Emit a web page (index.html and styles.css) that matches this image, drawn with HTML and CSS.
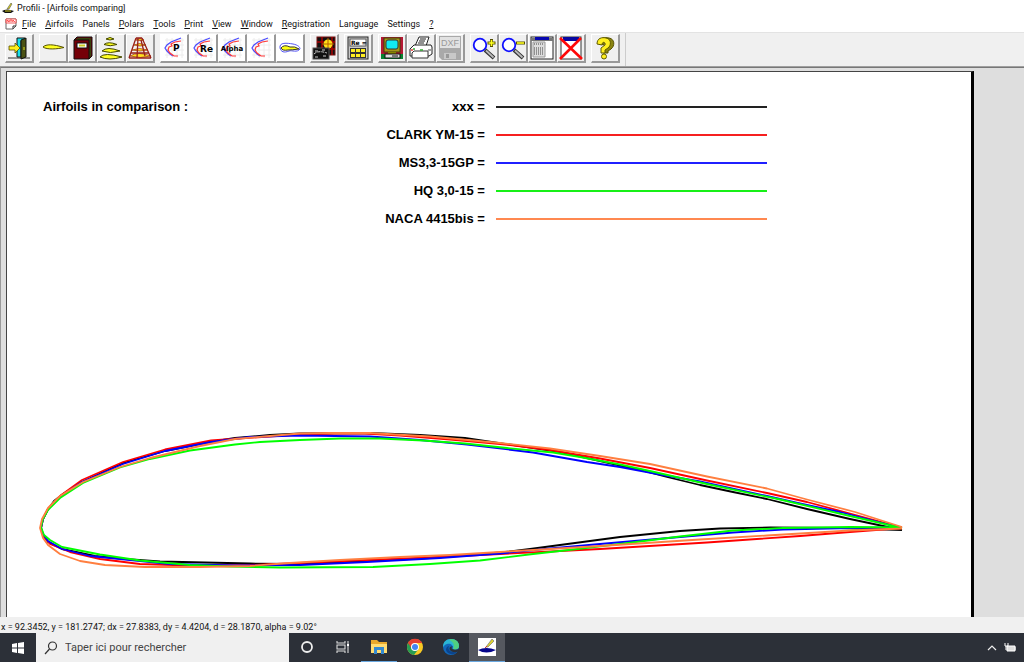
FILE: index.html
```html
<!DOCTYPE html>
<html lang="en">
<head>
<meta charset="utf-8">
<title>Profili - [Airfoils comparing]</title>
<link rel="stylesheet" href="styles.css">
</head>
<body>
<svg class="defs" aria-hidden="true">
  <defs>
    <g id="polar">
      <path d="M3 4H22M3 9H22M3 14H22M3 19H22M5 2V22M10 2V22M15 2V22M20 2V22" stroke="#ececec" fill="none"/>
      <path d="M19 2L14 4L9 6L5 9L3 12L5 15L8 18L11 20" stroke="#4848ff" stroke-width="1.2" fill="none"/>
      <path d="M19 5L13 6L9 8L10 10L7 11L6 14L8 17L12 20L16 20" stroke="#ff3838" stroke-width="1.2" fill="none"/>
    </g>
    <g id="lens">
      <circle cx="8" cy="9" r="6.3" fill="#fff" stroke="#1111ff" stroke-width="1.8"/>
      <path d="M13 14L22 22" stroke="#333" stroke-width="4"/>
      <path d="M14 14.500L21.500 21.500" stroke="#bbb" stroke-width="1.800"/>
    </g>
  </defs>
</svg>
<div class="app">
  <header class="titlebar">
    <svg class="app-icon" viewBox="0 0 12 12"><path d="M0 9Q4 6 12 9L9 11H3Z" fill="#111"/><path d="M5 7L9 1L10 2L7 7Z" fill="#d8cf20" stroke="#555" stroke-width=".6"/><path d="M3 9H9" stroke="#d8cf20"/></svg>
    <span>Profili - [Airfoils comparing]</span>
  </header>
  <nav class="menubar">
    <svg class="doc-icon" viewBox="0 0 12 12"><path d="M1 1H11V8L8 11H1Z" fill="#fff" stroke="#666"/><path d="M1 1H11V5H1Z" fill="#fff" stroke="#e33" stroke-width=".8"/><path d="M2 4V2L4 4V2M5 4V2H7V4M8 4V2L10 4" stroke="#f33" fill="none" stroke-width=".8"/><path d="M8 11V8H11" fill="none" stroke="#333"/></svg>
    <button><u>F</u>ile</button>
    <button><u>A</u>irfoils</button>
    <button>Panels</button>
    <button><u>P</u>olars</button>
    <button><u>T</u>ools</button>
    <button><u>P</u>rint</button>
    <button><u>V</u>iew</button>
    <button><u>W</u>indow</button>
    <button><u>R</u>egistration</button>
    <button>Language</button>
    <button>Settings</button>
    <button><u>?</u></button>
  </nav>
  <div class="toolbar">
    <div class="tools">
      <div class="group">
        <button aria-label="Exit"><svg viewBox="0 0 24 24"><path d="M1 22H23" stroke="#333"/><path d="M10 2H18V5H14V21H10Z" fill="#18e0e8" stroke="#111"/><path d="M14 4L19 2V21L14 23Z" fill="#4b5214" stroke="#111"/><path d="M17 11V14" stroke="#dd2"/><path d="M2 10H8V7L13 12L8 17V14H2Z" fill="#ffee18" stroke="#554c00" stroke-width=".8"/></svg></button>
      </div>
      <div class="group">
        <button aria-label="Airfoil"><svg viewBox="0 0 24 24"><path d="M2 11C5 8 12 8 23 11.500C17 13 6 14 2 11Z" fill="#ffff20" stroke="#555000"/></svg></button>
        <button aria-label="Library"><svg viewBox="0 0 24 24"><path d="M4 4L7 1H22V20L19 23H4Z" fill="#750008" stroke="#111"/><path d="M5 4L8 2H21L19 4Z" fill="#38420c"/><path d="M19 4L21 2V20L19 22Z" fill="#38420c"/><path d="M4 4H19V23" fill="none" stroke="#111"/><rect x="7" y="7" width="10" height="5" fill="#fff" stroke="#111"/><path d="M9 9.500H15" stroke="#cc2" stroke-width="2"/></svg></button>
        <button aria-label="Airfoil set"><svg viewBox="0 0 24 24" fill="#ffff20" stroke="#444800"><path d="M7 3Q11 0 15 3Q11 5 7 3ZM5 8.500Q9 5 18 8.500Q11 11 5 8.500ZM3 15Q8 10 21 15Q11 18 3 15ZM1 21Q5 16 23 21Q10 25 1 21Z"/></svg></button>
        <button aria-label="Wing"><svg viewBox="0 0 24 24"><g fill="#ffe020" stroke="#a54018" stroke-width=".8"><path d="M8 4Q12 1 16 4Q12 5 8 4ZM6 9Q11 6 18 9Q12 11 6 9ZM4 14Q11 11 20 14Q12 16 4 14ZM2 20Q10 15 23 20Q12 23 2 20Z"/></g><path d="M8 2L1 22M10 2L9 22M14 2L23 22M13 4L17 20M8 2H14M1 22H23M3 17H21" fill="none" stroke="#982018" stroke-width="1.300"/></svg></button>
      </div>
      <div class="group">
        <button class="white" aria-label="Polar P"><svg viewBox="0 0 24 24"><use href="#polar"/><text x="11" y="15" class="glyph">P</text></svg></button>
        <button class="white" aria-label="Polar Re"><svg viewBox="0 0 24 24"><use href="#polar"/><text x="9" y="16" class="glyph">Re</text></svg></button>
        <button class="white" aria-label="Polar Alpha"><svg viewBox="0 0 24 24"><use href="#polar"/><text x="12" y="15" class="glyph small">Alpha</text></svg></button>
        <button class="white" aria-label="Polar"><svg viewBox="0 0 24 24"><use href="#polar"/></svg></button>
        <button class="white" aria-label="Compare airfoils"><svg viewBox="0 0 24 24"><path d="M2 12C1 6 9 7 15 8C20 9 22 11 22 13C19 17 14 14 11 15C6 17 3 16 2 12Z" fill="none" stroke="#5555f5"/><path d="M3 12Q6 8 12 11Q17 10 21 13Q14 14 10 14Q4 15 3 12Z" fill="#ffff10" stroke="#333"/></svg></button>
      </div>
      <div class="group">
        <button aria-label="Processing"><svg viewBox="0 0 24 24"><rect x="5" y="1" width="18" height="18" fill="#111" stroke="#711"/><path d="M5 6H23M5 13H23M10 1V19M20 1V19" stroke="#a00" stroke-width="1.500"/><circle cx="16" cy="8" r="4.500" fill="#ffe018"/><path d="M10 8H22M16 2V14" stroke="#b66000"/><rect x="1" y="12" width="16" height="11" fill="#111" stroke="#555"/><path d="M2 18Q6 14 15 17M3 15H6M10 14H14M3 21H7M11 20H15" stroke="#ccc" fill="none" stroke-dasharray="3 1"/></svg></button>
      </div>
      <div class="group">
        <button aria-label="Reynolds calculator"><svg viewBox="0 0 24 24"><rect x="2" y="1" width="20" height="22" fill="#c8c8c8" stroke="#222"/><rect x="4" y="3" width="16" height="7" fill="#fff" stroke="#555"/><text x="5" y="9" class="glyph tiny">Re =</text><path d="M4 12H20V22H4Z" fill="#333"/><path d="M5 13H9V16H5ZM10 13H14V16H10ZM15 13H19V16H15ZM5 18H9V21H5ZM10 18H14V21H10ZM15 18H19V21H15Z" fill="#ffee20"/></svg></button>
      </div>
      <div class="group">
        <button aria-label="Display"><svg viewBox="0 0 24 24"><rect x="1" y="1" width="22" height="22" fill="#b51835"/><path d="M1 18H23V23H1Z" fill="#078330"/><rect x="4" y="2" width="16" height="14" fill="#a59618" stroke="#3c3c08"/><rect x="6" y="4" width="12" height="9" rx="2" fill="#12eaf2" stroke="#333"/><path d="M8 16H16V19H8Z" fill="#888400"/><rect x="5" y="18" width="15" height="4" fill="#ddd" stroke="#111"/><path d="M12 20H18" stroke="#111"/></svg></button>
        <button aria-label="Print"><svg viewBox="0 0 24 24"><path d="M6 10L10 1H20L17 10Z" fill="#fff" stroke="#222"/><path d="M11 3H17M10 5H16M9 7H15" stroke="#222" stroke-width="1.200"/><path d="M1 13L5 9H22L23 11V18L20 20H1Z" fill="#fff" stroke="#222"/><path d="M3 17L5 15H19V22H3Z" fill="#fff" stroke="#333"/><path d="M3 13V15" stroke="#e33" stroke-width="1.500"/><path d="M5 12V14M11 14H14" stroke="#3a3" stroke-width="1.500"/><path d="M19 14H22" stroke="#444"/></svg></button>
        <button class="muted" aria-label="DXF" disabled><svg viewBox="0 0 24 24"><path d="M1 0H23V24H4L1 21Z" fill="#a9a9a9"/><rect x="2" y="1" width="20" height="11" fill="#e2e2e2"/><text x="3" y="10" class="dxf">DXF</text><path d="M6 17H18V23H6Z" fill="#c8c8c8"/><path d="M8 18H11V22H8Z" fill="#999"/></svg></button>
      </div>
      <div class="group">
        <button aria-label="Zoom in"><svg viewBox="0 0 24 24"><use href="#lens"/><path d="M19.500 3V11M15.500 7H23.500" stroke="#555000" stroke-width="3"/><path d="M19.500 4V10M16.500 7H22.500" stroke="#ffff20" stroke-width="1.600"/></svg></button>
        <button aria-label="Zoom out"><svg viewBox="0 0 24 24"><use href="#lens"/><path d="M15 7H24" stroke="#555000" stroke-width="3"/><path d="M16 7H23" stroke="#ffff20" stroke-width="1.600"/></svg></button>
        <button aria-label="Window"><svg viewBox="0 0 24 24"><rect x="1" y="1" width="22" height="22" fill="#fff" stroke="#222"/><path d="M1 2H23V5H1Z" fill="#777"/><path d="M5 1H19V4H5Z" fill="#0808b0"/><path d="M3 6H15V21H3Z" fill="#ddd" stroke="#999"/><path d="M4 8H14M4 12H14M4 14H14M4 16H14M4 18H14" stroke="#444" stroke-dasharray="1 1"/></svg></button>
        <button aria-label="Close window"><svg viewBox="0 0 24 24"><rect x="2" y="1" width="20" height="22" fill="#fff" stroke="#333"/><path d="M4 1H20V5H4Z" fill="#0808a0"/><path d="M1 2L23 23M22 2L1 23" stroke="#ff0808" stroke-width="2.600"/></svg></button>
      </div>
      <div class="group">
        <button aria-label="Help"><svg viewBox="0 0 24 24"><path d="M6 8C5 2 11 1 16 2C22 3 22 10 18 13L15 15V17H10V12L14 9C15 6 11 5 11 9Z" fill="#8a8410" stroke="#555000"/><path d="M4 8C4 2 9 1 13 2C19 3 18 10 15 12L12 14V17H8V12L12 9C13 6 9 5 9 9Z" fill="#fff020" stroke="#605a00"/><circle cx="11" cy="20.500" r="2.500" fill="#fff020" stroke="#605a00"/></svg></button>
      </div>
    </div>
  </div>
  <main class="workspace">
    <section class="sheet">
      <div class="legend">
        <h1>Airfoils in comparison :</h1>
        <dl>
          <dt>xxx =</dt><dd class="k"></dd>
          <dt>CLARK YM-15 =</dt><dd class="r"></dd>
          <dt>MS3,3-15GP =</dt><dd class="b"></dd>
          <dt>HQ 3,0-15 =</dt><dd class="g"></dd>
          <dt>NACA 4415bis =</dt><dd class="o"></dd>
        </dl>
      </div>
      <svg class="plot" viewBox="7 233 964 385" role="img" aria-label="Airfoil profiles">
        <polyline class="sk" points="902,530 850,519 807,509 767,499 733,492 700,485 667,477 640,470 600,461 560,452 520,446 465,438 420,435 370,433 300,433.500 270,435 235,438 210,442 165,451 123,463 82,482 63,494 54,501 47,511 43,519 41,528 43,535 48,542 62,549 95,556 125,559 160,561.500 250,563.500 300,564 367,561 430,558 500,552.500 530,549 560,545 620,537 680,531 720,528.500 770,527.500 840,528 902,530"/>
        <polyline class="sr" points="902,527.500 850,513.500 807,502 767,493 707,480.500 650,468 600,458.500 550,450 500,444 450,439.500 400,435.500 365,433.500 335,433.500 300,434.500 246,438 211,440.500 165,449.500 123,462 82,480 60,496 48,509 43,519 41,528 44,537 50,544 70,552 100,559 140,564 190,565.500 250,565 300,563 367,560 430,557.500 500,554 560,551 600,549 707,542.500 800,536 850,532 902,528"/>
        <polyline class="sb" points="902,528 840,512 800,503.500 767,496 700,481.500 660,474.500 620,467 587,462 533,452.500 467,444.500 420,440 370,436.500 300,435.500 250,437 211,442 165,451 123,464 82,482 60,497 48,509 43,519 41,528 43,534 48,541 62,549 90,556 130,560 170,564 235,565.500 300,565 367,562 440,558 500,553.500 550,548.500 600,544 680,537 733,532.500 783,529.500 850,528 902,527.500"/>
        <polyline class="sg" points="902,528 850,516 780,499.500 707,484 650,471 620,464.500 580,457 553,452.500 507,448 465,443.500 423,440.500 380,438.500 340,438.500 300,440 260,442 235,444.500 190,450.500 150,459 120,467.500 83,483 60,498 48,510 43,519 41,527 44,535 50,540 62,547 100,554.500 140,560.500 190,565 230,566.500 280,567.500 373,567 430,564 480,560.500 533,554 573,549.500 620,544 680,536.500 733,530.500 783,528 850,527 902,527.500"/>
        <polyline class="so" points="902,527 855,512 807,499.500 767,488.500 707,476.500 650,464 600,456 550,448.500 500,443 430,436.500 370,433 330,433 300,433.500 270,436 235,439 200,446 150,458 120,467 83,482 60,496 48,508 42,519 40,528 43,538 48,545 60,554 80,561 105,565 145,567 200,567 250,566 290,563 340,560 400,557 450,555 500,552 550,549 600,546 700,539.500 767,535.500 850,530.500 902,528.500"/>
      </svg>
    </section>
  </main>
  <footer class="status">x = 92.3452, y = 181.2747; dx = 27.8383, dy = 4.4204, d = 28.1870, alpha = 9.02°</footer>
</div>
<div class="taskbar">
  <button class="start" aria-label="Start"><svg viewBox="0 0 14 14"><path d="M1 3L6 2V6.500H1ZM7 2L13 1V6.500H7ZM1 7.500H6V12L1 11ZM7 7.500H13V13L7 12Z" fill="#fff"/></svg></button>
  <label class="search"><svg viewBox="0 0 14 14"><circle cx="8.500" cy="5" r="4" fill="none" stroke="#333" stroke-width="1.200"/><path d="M5.500 8L1 13" stroke="#333" stroke-width="1.200"/></svg><input type="text" aria-label="Search" placeholder="Taper ici pour rechercher"></label>
  <button class="task" aria-label="Cortana"><svg viewBox="0 0 18 18"><circle cx="9" cy="9" r="5" fill="none" stroke="#eee" stroke-width="1.800"/></svg></button>
  <button class="task" aria-label="Task view"><svg viewBox="0 0 18 18"><path d="M3 3V5H11V3M3 15V13H11V15M3 7H11V11H3ZM14 3V15" fill="none" stroke="#ddd" stroke-width="1.100"/><path d="M13 6H15V8H13Z" fill="#fff"/></svg></button>
  <button class="task open" aria-label="Explorer"><svg viewBox="0 0 18 18"><path d="M1 2H7L9 4H17V15H1Z" fill="#e9a92c"/><path d="M1 6H17V15H1Z" fill="#ffdc72"/><path d="M4 9H14V16H11V12H7V16H4Z" fill="#3489d0"/></svg></button>
  <button class="task" aria-label="Chrome"><svg viewBox="0 0 18 18"><circle cx="9" cy="9" r="8" fill="#f9c924"/><path d="M9 9L2.100 5A8 8 0 0 1 16 5Z" fill="#e44134"/><path d="M2.100 5A8 8 0 0 0 8 17L12.500 11L9 9Z" fill="#279d53"/><path d="M9 5H16L12 10Z" fill="#f9c924"/><path d="M9 5H16A8 8 0 0 0 2 5L6 11Z" fill="#e44134"/><circle cx="9" cy="9" r="4" fill="#fff"/><circle cx="9" cy="9" r="3" fill="#4285f4"/></svg></button>
  <button class="task" aria-label="Edge"><svg viewBox="0 0 18 18"><circle cx="9" cy="9" r="8" fill="#1267ba"/><path d="M1 9C1 4 4 1 9 1C14 1 17 4 17 8C17 11 14 12 11 11C12 7 8 5 5 6C3 6.500 2 8 1 9Z" fill="#2bb5d5"/><path d="M9 1C14 1 17 4 17 8C17 11 14 12 11 11C13 8 12 4 7 2Z" fill="#50cf80"/><path d="M7 8C5 12 9 15 15 14C11 18 5 16 4 12C4 9 6 8 7 8Z" fill="#0b448d"/><path d="M11 8C8 10 10 13 17 11V13L15 14C10 15 6 12 8 9Z" fill="#2b3038"/></svg></button>
  <button class="task open active" aria-label="Profili"><svg viewBox="0 0 18 18"><path d="M0 0H18V18H0Z" fill="#fff"/><path d="M0 12Q8 8 18 12Q8 17 0 12Z" fill="#05058b"/><path d="M8 9L14 1L16 3L10 9Z" fill="#e0d52c" stroke="#777" stroke-width=".7"/><path d="M7 10L9 8" stroke="#c33"/></svg></button>
  <div class="tray">
    <svg viewBox="0 0 12 12"><path d="M2 8L6 4L10 8" fill="none" stroke="#eee" stroke-width="1.200"/></svg>
    <svg viewBox="0 0 12 12"><path d="M3 4H11V9H3Z" fill="#ddd" stroke="#fff"/><path d="M1 1V4H4V1M2 4V8" fill="none" stroke="#fff"/><path d="M12 5V8" stroke="#fff"/></svg>
  </div>
</div>
</body>
</html>
```
FILE: styles.css
```css
* { box-sizing: border-box; }
body {
  margin: 0;
  height: 100vh;
  display: flex;
  flex-direction: column;
  overflow: hidden;
  font-family: Roboto, "Noto Sans", sans-serif;
  font-size: 9px;
  color: #111;
  background: #f0f0f0;
}
button { font: inherit; color: inherit; border: 0; padding: 0; margin: 0; background: none; }
svg { display: block; flex: none; }
.defs { position: absolute; width: 0; height: 0; }
.app { flex: 1; min-height: 0; display: flex; flex-direction: column; }
.titlebar { height: 15px; display: flex; align-items: center; gap: 3px; padding-left: 2px; background: #fff; }
.app-icon { width: 12px; height: 12px; }
.menubar { height: 17px; display: flex; align-items: center; gap: 9px; padding-left: 5px; background: #fff; }
.doc-icon { width: 12px; height: 12px; margin-right: -4px; }
.menubar u { text-underline-offset: 1px; }
.toolbar { height: 35px; border-top: 1px solid #e3e3e3; border-bottom: 1px solid #a0a0a0; background: #f0f0f0; display: flex; }
.tools { display: flex; gap: 5px; padding: 1px 5px; border-right: 1px solid #ccc; }
.group { display: flex; }
.group button {
  width: 29px;
  height: 29px;
  display: grid;
  place-items: center;
  background: #f0f0f0;
  border: 1px solid #fff;
  border-right: 2px solid #999;
  border-bottom: 2px solid #999;
}
.group button.white { background: #fff; }
.group svg { width: 24px; height: 24px; overflow: visible; }
.glyph { font: bold 9px "DejaVu Sans", sans-serif; fill: #000; }
.glyph.small { font-size: 7px; text-anchor: middle; }
.glyph.tiny { font-size: 6px; }
.dxf { font: 9px "Liberation Sans", sans-serif; fill: #999; }
.workspace { flex: 1; min-height: 0; display: flex; padding: 3px 50px 0 5px; background: #dedede; border-top: 1px solid #777; border-left: 1px solid #999; }
.sheet { flex: 1; min-width: 0; overflow: hidden; background: #fff; border-top: 1px solid #444; border-left: 1px solid #444; border-right: 3px solid #000; }
.legend {
  display: grid;
  grid-template-columns: 28% 50%;
  padding: 21px 0 0 36px;
  font: bold 13px/28px "Liberation Sans", Arial, sans-serif;
  color: #000;
}
.legend h1 { margin: 0; font: inherit; white-space: nowrap; }
.legend dl { margin: 0; display: grid; grid-template-columns: 1fr 271px; column-gap: 11px; }
.legend dt { text-align: right; }
.legend dd { margin: 0; height: 2px; align-self: center; }
.k { background: #222; } .r { background: #f62020; } .b { background: #2020ff; } .g { background: #18f018; } .o { background: #ff8850; }
.plot { width: 100%; }
.plot polyline { fill: none; stroke-width: 1.8; stroke-linejoin: round; }
.sk { stroke: #000; } .sr { stroke: #f00; } .sb { stroke: #00f; } .sg { stroke: #0f0; } .so { stroke: #ff7f40; }
.status { height: 16px; line-height: 20px; padding-left: 1px; background: #f0f0f0; }
.taskbar { height: 29px; display: flex; align-items: stretch; background: #2c3038; }
.start { width: 36px; display: grid; place-items: center; }
.start svg { width: 14px; height: 14px; }
.search { width: 253px; display: flex; align-items: center; gap: 7px; padding-left: 8px; background: #f0f0f0; }
.search svg { width: 14px; height: 14px; }
.search input { flex: 1; min-width: 0; border: 0; padding: 0; outline: 0; background: none; font: 11px Roboto, sans-serif; color: #444; }
.search input::placeholder { color: #444; opacity: 1; }
.task { width: 36px; display: grid; place-items: center; border-bottom: 1px solid transparent; }
.task svg { width: 18px; height: 18px; }
.open { border-bottom-color: #6aa8e0; }
.active { background: #55585f; }
.tray { margin-left: auto; display: flex; align-items: center; gap: 6px; padding-right: 8px; }
.tray svg { width: 12px; height: 12px; }
```
